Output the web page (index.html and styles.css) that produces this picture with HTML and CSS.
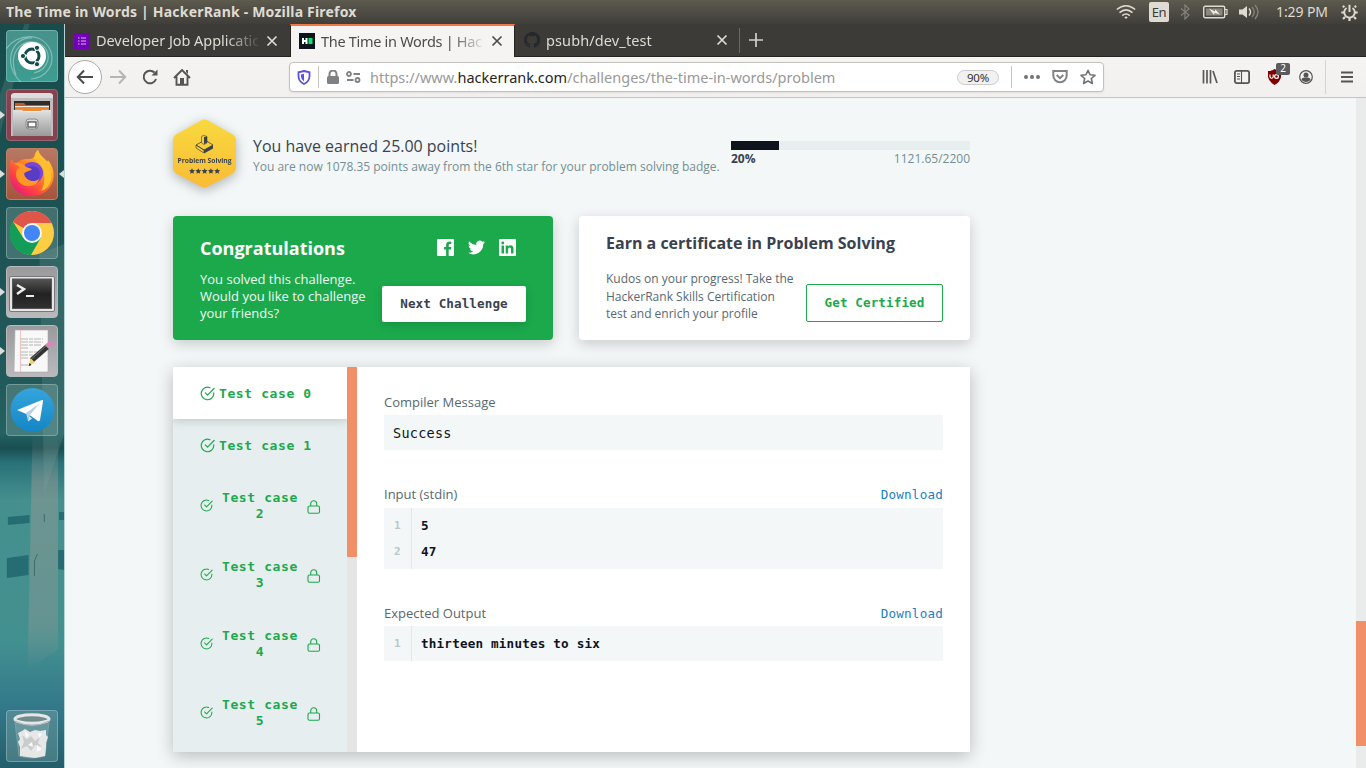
FILE: index.html
```html
<!DOCTYPE html>
<html lang="en">
<head>
<meta charset="utf-8">
<title>The Time in Words | HackerRank</title>
<link rel="stylesheet" href="styles.css">
</head>
<body>
<svg width="0" height="0" class="defs">
  <defs>
    <symbol id="check" viewBox="0 0 24 24"><path d="M22 11v1a10 10 0 1 1-6-9.2M22.500 4 12 14.500l-3.500-3.500" fill="none" stroke="#1ba94c" stroke-width="1.900" stroke-linecap="round" stroke-linejoin="round"/></symbol>
    <symbol id="lock" viewBox="0 0 14 14"><rect x="1" y="6" width="11.500" height="7.300" rx="1.500" fill="none" stroke="#1ba94c" stroke-width="1.100"/><path d="M3.700 6V3.700a3 3 0 0 1 6 0V6" fill="none" stroke="#1ba94c" stroke-width="1.100"/></symbol>
    <symbol id="close" viewBox="0 0 12 12"><path d="M1.500 1.500l9 9m0-9l-9 9" stroke="currentColor" stroke-width="1.700" fill="none"/></symbol>
    <linearGradient id="gold" x1="0" y1="0" x2="0" y2="1"><stop offset="0" stop-color="#f8d93f"/><stop offset="1" stop-color="#fabb35"/></linearGradient>
    <linearGradient id="fox" x1="1" y1="0" x2=".2" y2="1"><stop offset="0" stop-color="#fff34a"/><stop offset=".4" stop-color="#ff9a1f"/><stop offset=".75" stop-color="#ff4340"/><stop offset="1" stop-color="#e61587"/></linearGradient>
    <linearGradient id="steel" x1="0" y1="0" x2="0" y2="1"><stop offset="0" stop-color="#e2e2e2"/><stop offset="1" stop-color="#999"/></linearGradient>
    <linearGradient id="tele" x1="0" y1="0" x2="0" y2="1"><stop offset="0" stop-color="#35a5dc"/><stop offset="1" stop-color="#1486c4"/></linearGradient>
    <linearGradient id="screen" x1="0" y1="0" x2="0" y2="1"><stop offset="0" stop-color="#555"/><stop offset=".5" stop-color="#222"/><stop offset="1" stop-color="#303030"/></linearGradient>
    <linearGradient id="tower" x1="0" y1="0" x2="0" y2="1"><stop offset="0" stop-color="#a09a95" stop-opacity="0"/><stop offset=".2" stop-color="#a09a95" stop-opacity=".45"/><stop offset=".8" stop-color="#a09a95" stop-opacity=".35"/><stop offset="1" stop-color="#a09a95" stop-opacity="0"/></linearGradient>
  </defs>
</svg>
<header class="topbar">
  <span class="window-title">The Time in Words | HackerRank - Mozilla Firefox</span>
  <div class="indicators">
    <svg width="20" height="16" viewBox="0 0 20 16" fill="none" stroke="#dfdbd2" stroke-width="1.500"><path d="M.8 5.500q9.200-7.500 18.400 0M3.500 8.600q6.500-5.500 13 0M6.200 11.600q3.800-3.300 7.600 0"/><path d="M8.300 13.200q1.700-1.500 3.400 0L10 15z" fill="#dfdbd2" stroke="none"/></svg>
    <span class="lang">En</span>
    <svg width="10" height="16" viewBox="0 0 10 16" fill="none" stroke="#85827b" stroke-width="1.200"><path d="M1 4.500l8 6.500-4 4V1l4 4-8 6.500"/></svg>
    <svg width="25" height="14" viewBox="0 0 25 14"><rect x=".7" y="1.200" width="21" height="11.600" rx="1.500" fill="none" stroke="#dfdbd2" stroke-width="1.400"/><path d="M22 4.500h2v5h-2" fill="none" stroke="#dfdbd2" stroke-width="1.200"/><rect x="3" y="3.500" width="16.500" height="7" fill="#8b8880"/><path d="M6 3.600l6 2.900.3-2.200 4.700 5.500-5.500-2.100-.4 2.300z" fill="#f1eee7"/></svg>
    <svg width="20" height="16" viewBox="0 0 20 16" fill="none" stroke-width="1.400"><path d="M0 5.500h3.500L8 2v12l-4.500-3.500H0z" fill="#dfdbd2"/><path d="M10 4.500q3 3.500 0 7" stroke="#dfdbd2"/><path d="M13 3q4.500 5 0 10M16 1q6 7 0 14" stroke="#858179"/></svg>
    <span class="clock">1:29 PM</span>
    <svg width="17" height="17" viewBox="0 0 17 17" fill="none" stroke="#dfdbd2"><path d="M5.500 4A5.300 5.300 0 1 0 11.500 4" stroke-width="1.900"/><path d="M8.500.8V8" stroke-width="2"/><path d="M3.300 3.300L1.900 1.900M13.700 3.300l1.400-1.400M3 8.500H.3M14 8.500h2.700M4 13l-2 2M13 13l2 2M8.500 14v3" stroke-width="2.200"/></svg>
  </div>
</header>
<div class="desktop">
  <nav class="launcher">
    <svg class="wallpaper" viewBox="0 0 65 744" preserveAspectRatio="none">
      <path d="M0 70L25 0h5L0 110zM40 230l25-10v190l-20 60z" fill="#7aa6a0" opacity=".22"/>
      <path d="M33 410h26v215l-31 22z" fill="url(#tower)"/>
      <path d="M8 493l22-2v8l-22 2zM60 488h5v8h-5zM7 534l22-3v20l-22 3zM59 526h6v20l-6-1z" fill="#155b64" opacity=".65"/>
      <path d="M38 530l-3 7v15M45 490v8" stroke="#36635f" fill="none" opacity=".8"/>
    </svg>
    <div class="tile tile-dash"><svg viewBox="0 0 52 52"><path d="M10 45C0 20 20 5 36 15c10 8 8 24-8 28M0 19C10 4 37 0 45 22c4 14-6 26-20 27M15 52C-4 35 5 7 26 8" fill="none" stroke="#b5ded3" stroke-width="1.200" opacity=".55"/><circle cx="26" cy="26" r="14" fill="#fff"/><g transform="translate(-.5 -.5)"><circle cx="26.500" cy="26.500" r="7" fill="none" stroke="#124d4a" stroke-width="3"/><path d="M26 26L17.500 26M27 27l4.500 7.500M27 26l4.500-7.500" stroke="#fff" stroke-width="1.400"/><circle cx="26.500" cy="26.500" r="5" fill="#fff"/><g fill="#124d4a" stroke="#fff"><circle cx="17.500" cy="26.500" r="2.600"/><circle cx="31.500" cy="18.300" r="2.600"/><circle cx="31.500" cy="34.700" r="2.600"/></g></g></svg></div>
    <div class="tile tile-files open"><svg viewBox="0 0 52 52"><path d="M5 6q1-2 3-2h36q2 0 3 2v17H5z" fill="#dcdcdc"/><path d="M5 9h42v38H5z" fill="#bdbdbd"/><path d="M8 12h36v13H8z" fill="#312c28"/><path d="M9 14h9l2 2h23v8H9z" fill="#c25b20"/><path d="M9 17h34v7H9z" fill="#f3eee5"/><path d="M9 18h34v4H9z" fill="#e98b38"/><path d="M7 21l9 0 3 2h14l3-2 9 0v26H7z" fill="url(#steel)"/><rect x="20" y="30" width="12" height="10" rx="3" fill="#ddd" stroke="#888"/><rect x="22" y="33" width="8" height="5" fill="#fff" stroke="#555" stroke-width="1.300"/></svg></div>
    <div class="tile tile-fox open focused"><svg viewBox="0 0 52 52"><path d="M5 11l5 5c3-4 7-5 11-5 3 0 5 0 7-2 1-3 2-6 4-7 1 6 5 7 9 12l1-2c12 15 4 35-15 36C9 49-1 34 5 11z" fill="url(#fox)"/><circle cx="26" cy="25" r="11" fill="#7346df"/><circle cx="26" cy="26" r="8" fill="#593cc5"/><path d="M8 15c6-1 10 0 12 4l6 2c-3 3-7 2-8 5 2 7 10 9 15 5-2 9-17 10-22 0-2-5-1-10 3-12z" fill="#ff9727"/><path d="M28 11c3-5 3-8 4-9 2 7 9 8 11 16 6 14-1 23-8 25 5-8 3-16 3-20-3-7-6-9-10-12z" fill="#ffbf2c"/></svg></div>
    <div class="tile"><svg viewBox="0 0 52 52"><circle cx="26" cy="26" r="22" fill="#ffcd43"/><path d="M26 26L6.900 15A22 22 0 0 1 45.100 15L46.500 16H26z" fill="#de5549"/><path d="M26 26l8.700 5L25 48A22 22 0 0 1 6.900 14.500L17.300 31z" fill="#129d58"/><circle cx="26" cy="26" r="10" fill="#f7f7f7"/><circle cx="26" cy="26" r="8" fill="#4285f4"/></svg></div>
    <div class="tile tile-grey open"><svg viewBox="0 0 52 52"><rect x="3.500" y="10.500" width="45" height="35" rx="1.500" fill="#e6e6e6" stroke="#777"/><rect x="6.500" y="13" width="39" height="29.500" fill="url(#screen)" stroke="#555"/><path d="M11 19l7 4-7 5" fill="none" stroke="#eee" stroke-width="2.500"/><path d="M20 30h8" stroke="#eee" stroke-width="2"/></svg></div>
    <div class="tile tile-grey open"><svg viewBox="0 0 52 52"><path d="M9 5h33v42H8z" fill="#f8f8f8" stroke="#aaa" stroke-width=".6"/><path d="M14.500 5v42" stroke="#e9aaa9" stroke-width=".7"/><path d="M15 14h22M15 17h22M15 20h20M15 23h8M15 27h20M15 30h15M15 33h8M15 40h10" stroke="#a5a5a5" stroke-width=".8" stroke-dasharray="7 1 4 1"/><path d="M25.500 35.500L41.500 21.500" stroke="#333" stroke-width="5.500"/><path d="M25.500 34L40.500 20.500" stroke="#777"/><path d="M24.500 33l4.500 4.500-6 3z" fill="#ecd36f"/><path d="M23.500 38l-1 3 3-1z" fill="#222"/><path d="M41 22l2-2" stroke="#bbb" stroke-width="5.500"/><path d="M43 20l2.500-1.500" stroke="#d688ba" stroke-width="5.500" stroke-linecap="round"/></svg></div>
    <div class="tile"><svg viewBox="0 0 52 52"><circle cx="26.500" cy="26" r="22" fill="url(#tele)"/><path d="M11 26l25-10q1.500-.5 1 1.500L34 36q-.7 2-2.500.8L25 32z" fill="#fff"/><path d="M20 29L34 19 23 32l-1 5z" fill="#b6d3e5"/><path d="M23 32l3 2.500-4 3z" fill="#dcebf4"/></svg></div>
    <div class="tile tile-trash"><svg viewBox="0 0 52 52"><path d="M9 12l4 34q13 4 26 0l4-34z" fill="#a9c5c7" opacity=".3" stroke="#ddd"/><path d="M12 23l4-2 3-2 5 3 5-2 5 1 6-1v5l2 2-2 6v5l-1 8-10 2-8-1-7-1v-9l-2-5 2-3z" fill="#e6e7e7"/><path d="M16 25l5 4 4-3 4 5 5-4-2 6 4 4-7-2-4 6-4-5-6 3 3-7z" fill="#c9cccc"/><path d="M19 21l4 4-3 3zM32 23l4 1-3 4zM22 35l4-3 1 5zM31 35l5 4-5 3z" fill="#fafafa"/><ellipse cx="26" cy="9" rx="17" ry="4.300" fill="#718c8d" stroke="#e6e6e6" stroke-width="3"/><path d="M9 11q17 9 34 0" stroke="#b3b3b3" fill="none"/></svg></div>
  </nav>
  <section class="browser">
    <div class="tabs">
      <div class="tab"><svg class="favicon" viewBox="0 0 16 16"><path d="M0 0h16v16H0z" fill="#7200b5"/><path d="M4 5h1.500M7 5h5M4 8h1.500M7 8h5M4 11h1.500M7 11h5" stroke="#d9b7ec" stroke-width="1.200"/></svg><span class="tab-title">Developer Job Applicatio</span><svg class="tab-close"><use href="#close"/></svg></div>
      <div class="tab active"><svg class="favicon" viewBox="0 0 16 16"><path d="M0 0h16v16H0z" fill="#0e141e"/><path d="M3 5h2v2h1.500V5h2v6h-2V9H5v2H3z" fill="#fff"/><path d="M9.500 5h4v6h-4z" fill="#05e76d"/></svg><span class="tab-title second">The Time in Words | Hack</span><svg class="tab-close"><use href="#close"/></svg></div>
      <div class="tab last"><svg class="favicon" viewBox="0 0 16 16"><path fill="#24292e" d="M8 0a8 8 0 0 0-2.530 15.590c.4.070.55-.17.550-.38v-1.490C3.780 14.200 3.310 12.900 3.310 12.900c-.36-.92-.89-1.170-.89-1.170-.73-.5.050-.49.050-.49.800.06 1.230.83 1.230.83.710 1.220 1.870.87 2.330.66.070-.52.280-.87.500-1.070-1.780-.2-3.640-.89-3.640-3.950 0-.87.310-1.590.82-2.150-.08-.2-.36-1.020.080-2.120 0 0 .67-.21 2.200.82a7.700 7.700 0 0 1 4 0c1.530-1.040 2.200-.82 2.200-.82.440 1.100.160 1.920.080 2.120.510.560.820 1.270.820 2.150 0 3.070-1.870 3.750-3.650 3.950.290.250.540.730.540 1.480v2.190c0 .21.150.460.550.380A8 8 0 0 0 8 0z"/></svg><span class="tab-title third">psubh/dev_test</span><svg class="tab-close"><use href="#close"/></svg></div>
      <svg class="new-tab" width="14" height="14" viewBox="0 0 14 14"><path d="M7 0v14M0 7h14" stroke="#d3cfc9" stroke-width="1.700"/></svg>
    </div>
    <div class="toolbar">
      <span class="back"><svg width="18" height="16" viewBox="0 0 18 16"><path d="M8 1.500L1.800 8 8 14.500M2 8h15" fill="none" stroke="#4b4b4b" stroke-width="2"/></svg></span>
      <svg class="forward" width="17" height="16" viewBox="0 0 17 16"><path d="M9 1.500L15.200 8 9 14.500M0 8h15" fill="none" stroke="#b6b5b3" stroke-width="2"/></svg>
      <svg class="reload" width="16" height="16" viewBox="0 0 16 16"><path d="M14 10A6.300 6.300 0 1 1 12.500 3.500" fill="none" stroke="#555" stroke-width="2"/><path d="M9.500 6.500H15.500V.5z" fill="#555"/></svg>
      <svg class="home" width="18" height="17" viewBox="0 0 18 17"><path d="M1 9l8-8 8 8M3.500 7.500v8.300h11V7.500" fill="none" stroke="#555" stroke-width="1.900"/><path d="M13 1h2v4l-2-2zM7 9h4v7H7z" fill="#555"/></svg>
      <div class="address">
        <svg class="shield" width="14" height="15" viewBox="0 0 14 15"><path d="M7 1l5.500 1.300v4.200Q12.200 11.500 7 14 1.800 11.500 1.500 6.500V2.300z" fill="none" stroke="#5b50e0" stroke-width="1.800"/><path d="M7 3.700v7.700q-3-2-3-5V4.400z" fill="#5b50e0"/></svg>
        <i class="rule"></i>
        <svg class="padlock" width="12" height="14" viewBox="0 0 12 14"><rect y="6" width="12" height="8" rx="1.500" fill="#818181"/><path d="M2.500 7V4a3.500 3.500 0 0 1 7 0v3" fill="none" stroke="#818181" stroke-width="2"/></svg>
        <svg class="perm" width="15" height="12" viewBox="0 0 15 12" fill="none" stroke="#818181" stroke-width="1.800"><circle cx="3" cy="3" r="2"/><path d="M7.500 3H14M1 9h6.500"/><circle cx="11.500" cy="9" r="2"/></svg>
        <span class="url">https://www.<b>hackerrank.com</b>/challenges/the-time-in-words/problem</span>
        <span class="zoom">90%</span>
        <i class="rule tall"></i>
        <svg class="dots" width="16" height="4" viewBox="0 0 16 4" fill="#737373"><circle cx="2" cy="2" r="2"/><circle cx="8" cy="2" r="2"/><circle cx="14" cy="2" r="2"/></svg>
        <svg class="pocket" width="16" height="14" viewBox="0 0 16 14" fill="none" stroke="#818181" stroke-width="2"><path d="M1.300 1h13.400v4.500a6.700 6.700 0 0 1-13.400 0z"/><path d="M4.700 5L8 8.200 11.300 5"/></svg>
        <svg class="star" width="16" height="16" viewBox="0 0 16 16"><path d="M8 1.300l2 4.500 5 .5-3.700 3.200 1.100 5L8 12l-4.400 2.500 1.100-5L1 6.300l5-.5z" fill="none" stroke="#737373" stroke-width="1.600" stroke-linejoin="round"/></svg>
      </div>
      <svg class="library" width="16" height="16" viewBox="0 0 16 16" stroke="#5a5a5a" stroke-width="1.700"><path d="M1.500 1v13.500M5 1v13.500M8.500 1v13.500M11 2l4 12"/></svg>
      <svg class="sidebar-icon" width="16" height="14" viewBox="0 0 16 14"><rect x=".9" y=".9" width="14.200" height="12.200" rx="1.800" fill="none" stroke="#555" stroke-width="1.800"/><path d="M7.500 1v12M3 4h3M3 6.500h3M3 9h3" stroke="#555" stroke-width="1.100"/></svg>
      <div class="ublock"><svg width="15" height="16" viewBox="0 0 15 16"><path d="M7.500 0Q10 2 14 2v6q-1 5-6.500 8Q2 13 1 8V2q4 0 6.500-2z" fill="#800000"/><path d="M3 5.500V8q1.600 2.500 3.200 0V5.500" stroke="#fff" fill="none" stroke-width="1.200"/><circle cx="9.500" cy="7.500" r="1.900" stroke="#fff" fill="none" stroke-width="1.200"/></svg><span>2</span></div>
      <svg class="account" width="14" height="14" viewBox="0 0 14 14"><circle cx="7" cy="7" r="6.300" fill="none" stroke="#555" stroke-width="1.200"/><circle cx="7" cy="5" r="2.500" fill="#555"/><path d="M2.500 10q0-2.500 3-2.500h3q3 0 3 2.500Q7 14 2.500 10z" fill="#555"/></svg>
      <i class="rule menu-rule"></i>
      <svg class="menu" width="12" height="12" viewBox="0 0 12 12"><path d="M0 1.500h12M0 6h12M0 10.500h12" stroke="#555" stroke-width="1.800"/></svg>
    </div>
    <main class="page">
      <div class="content">
        <section class="score">
          <svg class="badge" width="63" height="70" viewBox="0 0 63 70"><path d="M28 1.500q3.500-2 7 0l24 13.500q4 2.500 4 6v28q0 3.500-4 6L35 67.500q-3.500 2-7 0L4 55q-4-2.500-4-6V21q0-3.500 4-6z" fill="url(#gold)"/><path d="M23 26l9-5 8 5-9 5z" fill="none" stroke="#494336" stroke-width=".8"/><path d="M23 26v3l8 5v-3z" fill="none" stroke="#494336" stroke-width=".7"/><path d="M31 31l9-5v3.500L31 34.500z" fill="#39424e"/><path d="M28.500 24v-6q0-1.500 2.500-1.500l3 1v6.500l-3 1.500z" fill="#f6cf3d" stroke="#494336" stroke-width=".6"/><path d="M31 18l3-.5v6l-3 1.700z" fill="#39424e"/><text x="31.500" y="44.300" textLength="54" lengthAdjust="spacingAndGlyphs">Problem Solving</text><g fill="#39424e"><path id="s" d="M19 49.200l.9 1.900 2.100.2-1.600 1.400.5 2.100-1.900-1.100-1.900 1.100.5-2.100-1.600-1.400 2.100-.2z"/><use href="#s" x="6.300"/><use href="#s" x="12.600"/><use href="#s" x="18.900"/><use href="#s" x="25.200"/></g></svg>
          <div class="score-text"><h2>You have earned 25.00 points!</h2><p>You are now 1078.35 points away from the 6th star for your problem solving badge.</p></div>
          <div class="progress"><div class="bar"><div style="width:20%"></div></div><div class="bar-labels"><b>20%</b><span>1121.65/2200</span></div></div>
        </section>
        <section class="cards">
          <article class="card congrats">
            <div class="card-copy"><h3>Congratulations</h3><p>You solved this challenge.<br>Would you like to challenge<br>your friends?</p></div>
            <div class="card-actions">
              <div class="social">
                <svg width="17" height="17" viewBox="0 0 17 17"><path fill="#fff" d="M1 0h15q1 0 1 1v15q0 1-1 1h-4.300v-6.500h2.200l.3-2.600h-2.500V6.300q0-1.200 1.300-1.200h1.300V2.700q-4.900-.6-5.200 3.200v2H7v2.600h2.100V17H1q-1 0-1-1V1q0-1 1-1z"/></svg>
                <svg width="17" height="17" viewBox="0 0 24 24"><path fill="#fff" d="M24 4.600a10 10 0 0 1-2.800.8 5 5 0 0 0 2.100-2.700 10 10 0 0 1-3.100 1.200 4.900 4.900 0 0 0-8.400 4.500A14 14 0 0 1 1.700 3.200a4.900 4.900 0 0 0 1.500 6.500 5 5 0 0 1-2.200-.6 4.900 4.900 0 0 0 3.900 4.900 5 5 0 0 1-2.200.1 4.900 4.900 0 0 0 4.600 3.400A10 10 0 0 1 0 19.500a14 14 0 0 0 21.500-12.400A10 10 0 0 0 24 4.600z"/></svg>
                <svg width="17" height="17" viewBox="0 0 17 17"><path fill="#fff" fill-rule="evenodd" d="M1 0h15q1 0 1 1v15q0 1-1 1H1q-1 0-1-1V1q0-1 1-1zM2.500 6.500v8H5v-8zM3.700 2.500a1.400 1.400 0 1 0 .1 2.900 1.400 1.400 0 0 0-.1-2.900zM6.700 6.500v8h2.400v-4q0-2 1.500-2t1.400 2v4h2.500v-4.700q0-3.500-2.900-3.500-1.800 0-2.500 1.300V6.500z"/></svg>
              </div>
              <button class="btn next">Next Challenge</button>
            </div>
          </article>
          <article class="card certify">
            <h3>Earn a certificate in Problem Solving</h3>
            <div class="certify-row"><p>Kudos on your progress! Take the<br>HackerRank Skills Certification<br>test and enrich your profile</p><button class="btn get">Get Certified</button></div>
          </article>
        </section>
        <section class="results">
          <div class="cases">
            <div class="case selected"><svg width="15" height="15"><use href="#check"/></svg><span>Test case 0</span></div>
            <div class="case"><svg width="15" height="15"><use href="#check"/></svg><span>Test case 1</span></div>
            <div class="case locked"><svg width="13" height="13"><use href="#check"/></svg><span>Test case<br>2</span><svg class="lock" width="14" height="14"><use href="#lock"/></svg></div>
            <div class="case locked"><svg width="13" height="13"><use href="#check"/></svg><span>Test case<br>3</span><svg class="lock" width="14" height="14"><use href="#lock"/></svg></div>
            <div class="case locked"><svg width="13" height="13"><use href="#check"/></svg><span>Test case<br>4</span><svg class="lock" width="14" height="14"><use href="#lock"/></svg></div>
            <div class="case locked"><svg width="13" height="13"><use href="#check"/></svg><span>Test case<br>5</span><svg class="lock" width="14" height="14"><use href="#lock"/></svg></div>
          </div>
          <div class="case-scroll"><div></div></div>
          <div class="output">
            <div class="label"><span>Compiler Message</span></div>
            <pre class="message">Success</pre>
            <div class="label"><span>Input (stdin)</span><a>Download</a></div>
            <div class="code"><div class="nums">1<br>2</div><pre>5
47</pre></div>
            <div class="label"><span>Expected Output</span><a>Download</a></div>
            <div class="code single"><div class="nums">1</div><pre>thirteen minutes to six</pre></div>
          </div>
        </section>
      </div>
      <div class="page-scroll"><div></div></div>
    </main>
  </section>
</div>
</body>
</html>
```
FILE: styles.css
```css
* { box-sizing: border-box; }
body { margin: 0; width: 1366px; height: 768px; overflow: hidden; font-family: "Open Sans", "Noto Sans", sans-serif; color: #39424e; }
h2, h3, p, pre { margin: 0; }
svg { display: block; flex: none; }
.defs { position: absolute; }
.topbar { height: 24px; display: flex; align-items: center; justify-content: space-between; padding: 0 8px 0 6px; background: linear-gradient(#5d5a4e, #4e4c44 50%, #3f3e39); color: #dfdbd2; }
.window-title { font: bold 14px/24px "Noto Sans", sans-serif; letter-spacing: .2px; white-space: nowrap; }
.indicators { display: flex; align-items: center; font: 14px/24px "Noto Sans", sans-serif; }
.lang { width: 20px; height: 20px; margin: 0 11px 0 13px; border-radius: 2px; background: #dfdbd2; color: #3c3b37; font-size: 13px; line-height: 20px; text-align: center; letter-spacing: -.4px; }
.indicators svg:nth-child(4) { margin: 0 11px 0 13px; }
.clock { width: 53px; margin: 0 12px 0 17px; white-space: nowrap; letter-spacing: -.1px; }
.desktop { display: flex; height: 744px; }
.launcher { position: relative; width: 65px; padding: 6px 0 6px 6px; display: flex; flex-direction: column; gap: 7px; background: linear-gradient(#174b4c, #22595a 48%, #246263 55%, #194e51 57%, #287278 59%, #45908e 64%, #439090 83%, #32788a 92%, #235e6a); border-right: 1px solid #b6d3d6; }
.wallpaper { position: absolute; left: 0; top: 0; width: 100%; height: 100%; }
.tile { position: relative; width: 52px; height: 52px; border-radius: 4px; background: rgba(160,190,185,.28); border: 1px solid rgba(220,235,235,.3); }
.tile > svg { width: 52px; height: 52px; margin: -1px; }
.tile-dash { background: linear-gradient(#47928b, #3d9c91); }
.tile-files { background: #88424f; border-color: #9b6570; }
.tile-fox { background: linear-gradient(#b77963, #a5553d); border-color: #bd8068; }
.tile-grey { background: linear-gradient(#9a9a9d, #bababc); border-color: #b9b9bb; }
.tile-trash { margin-top: auto; }
.open::before { content: ""; position: absolute; left: -7px; top: 21px; border: 4px solid transparent; border-left: 5px solid #ddd; border-right: 0; }
.focused::after { content: ""; position: absolute; right: -7px; top: 21px; border: 4px solid transparent; border-right: 5px solid #ddd; border-left: 0; }
.browser { width: 1301px; display: flex; flex-direction: column; }
.tabs { height: 33px; display: flex; align-items: center; background: #3c3b37; border-bottom: 1px solid #252420; }
.tab { width: 225px; height: 33px; display: flex; align-items: center; padding: 1px 12px 0 9px; color: #dfdbd2; font: 14.500px/20px "Noto Sans", sans-serif; }
.tab.active { background: #f5f4f2; color: #4c4c4c; border-top: 2px solid #f07746; border-left: 1px solid #252420; border-right: 1px solid #252420; padding: 0 11px 0 8px; }
.tab.last { width: 225px; height: 25px; border-right: 1px solid #696864; padding: 0 11px 0 9px; }
.favicon { width: 16px; height: 16px; margin-right: 6px; }
.tab-title { flex: 1; min-width: 0; overflow: hidden; white-space: nowrap; padding-bottom: 1px; letter-spacing: -.05px; -webkit-mask-image: linear-gradient(90deg, #000 130px, transparent 166px); mask-image: linear-gradient(90deg, #000 130px, transparent 166px); }
.tab-title.second { letter-spacing: -.3px; }
.tab-title.third { letter-spacing: .12px; }
.tab-close { width: 12px; height: 12px; margin-left: 8px; }
.new-tab { margin-left: 9px; }
.toolbar { height: 41px; flex: none; display: flex; align-items: center; background: linear-gradient(#f5f4f2, #f1f0ee); border-bottom: 1px solid #c5c4c1; padding-left: 3px; }
.back { width: 34px; height: 34px; display: grid; place-items: center; border: 1px solid #aaa; border-radius: 50%; background: #fff; }
.forward { margin-left: 8px; }
.reload { margin-left: 15px; }
.home { margin-left: 15px; }
.address { width: 815px; height: 30px; margin-left: 98px; display: flex; align-items: center; border: 1px solid #c3c1be; border-radius: 4px; background: #fff; padding-left: 7px; box-shadow: 0 1px 2px rgba(0,0,0,.08); }
.rule { width: 1px; height: 22px; background: #c5c4c1; margin-left: 7px; }
.padlock { margin-left: 8px; }
.perm { margin-left: 7px; }
.url { width: 466px; margin-left: 9px; white-space: nowrap; color: #999; font: 14.500px/24px "Noto Sans", sans-serif; }
.url b { font-weight: normal; color: #252525; }
.zoom { width: 42px; height: 15px; margin-left: 121px; border: 1px solid #ccc; border-radius: 8px; background: #f1f1f1; color: #333; font: 11.500px/13px "Noto Sans", sans-serif; text-align: center; letter-spacing: -.3px; }
.rule.tall { margin-left: 12px; }
.dots { margin-left: 12px; }
.pocket { margin-left: 12px; }
.star { margin-left: 12px; }
.library { margin-left: 98px; }
.sidebar-icon { margin-left: 16px; }
.ublock { position: relative; margin-left: 17px; }
.ublock span { position: absolute; left: 9px; top: -6px; width: 14px; height: 12px; background: #5c5c5e; border-radius: 2px; color: #fff; font: 10px/11px "Noto Sans", sans-serif; text-align: center; }
.account { margin-left: 17px; }
.menu-rule { height: 34px; margin-left: 12px; background: #d5d4d1; }
.menu { margin-left: 15px; }
.page { height: 670px; display: flex; justify-content: space-between; background: #f3f7f7; }
.content { width: 905px; padding: 21px 0 0 108px; }
.score { display: flex; height: 97px; }
.badge { overflow: visible; filter: drop-shadow(0 3px 6px rgba(0,0,0,.28)); }
.badge text { font: bold 6.500px "Open Sans", sans-serif; text-anchor: middle; fill: #39424e; }
.score-text { flex: none; width: 495px; padding: 16px 0 0 17px; white-space: nowrap; }
.score-text h2 { font-size: 15.950px; font-weight: 400; line-height: 22px; }
.score-text p { font-size: 12px; line-height: 19px; color: #738f93; }
.progress { width: 239px; padding-top: 22px; }
.bar { height: 9px; background: #e7eeef; }
.bar div { height: 9px; background: #0e141e; }
.bar-labels { display: flex; justify-content: space-between; font-size: 12px; line-height: 17px; color: #738f93; }
.bar-labels b { color: #39424e; }
.cards { display: flex; gap: 26px; height: 124px; margin-bottom: 27px; }
.card { height: 124px; border-radius: 4px; box-shadow: 0 4px 14px rgba(0,0,0,.18); }
.congrats { width: 380px; background: #1ba94c; color: #fff; display: flex; justify-content: space-between; padding: 20px 27px 18px; }
.congrats h3 { font-size: 18px; line-height: 24px; margin-bottom: 11px; }
.congrats p { font-size: 13px; line-height: 17px; white-space: nowrap; color: #f0faf3; }
.card-actions { display: flex; flex-direction: column; justify-content: space-between; width: 144px; }
.social { display: flex; gap: 14px; padding: 3px 10px 0 55px; }
.btn { font: bold 12.600px/18px "DejaVu Sans Mono", monospace; letter-spacing: .1px; padding: 0; border-radius: 2px; white-space: nowrap; }
.next { width: 144px; height: 36px; background: #fff; color: #39424e; border: 0; box-shadow: 0 3px 9px rgba(0,0,0,.14); }
.certify { width: 391px; background: #fff; padding: 16px 27px 18px; }
.certify h3 { font-size: 16px; line-height: 22px; white-space: nowrap; }
.certify-row { display: flex; justify-content: space-between; padding-top: 16px; }
.certify p { font-size: 12px; line-height: 17.500px; color: #576871; white-space: nowrap; }
.get { width: 137px; height: 38px; margin-top: 14px; background: #fff; border: 1px solid #1ba94c; color: #1ba94c; }
.results { display: flex; height: 385px; background: #fff; box-shadow: 0 4px 16px rgba(0,0,0,.24); }
.cases { width: 174px; background: #e7eeef; color: #1ba94c; font: bold 13px/16px "DejaVu Sans Mono", monospace; letter-spacing: .6px; }
.case { height: 52px; display: flex; align-items: center; gap: 4px; padding-left: 27px; white-space: nowrap; }
.case span { padding-top: 1px; }
.case.selected { background: #fff; box-shadow: 0 2px 9px rgba(0,0,0,.16); position: relative; clip-path: inset(0 0 -12px 0); }
.case.locked { height: 69px; gap: 9px; text-align: center; }
.case.locked span { padding-top: 0; }
.lock { margin-top: 3px; }
.case-scroll { width: 10px; background: #e5e5e5; }
.case-scroll div { height: 190px; background: #f08f68; border-radius: 1px; }
.output { width: 613px; padding: 26px 27px 0; }
.label { height: 18px; display: flex; justify-content: space-between; align-items: center; font-size: 13px; line-height: 18px; color: #576871; margin-bottom: 4px; }
.label a { color: #1b80c4; font: 12.600px/18px "DejaVu Sans Mono", monospace; letter-spacing: .2px; padding-top: 1px; }
.message { height: 35px; background: #f3f7f7; color: #0e141e; font: 13.500px/36px "DejaVu Sans Mono", monospace; letter-spacing: .25px; padding-left: 9px; margin-bottom: 35px; }
.code { height: 61px; display: flex; background: #f3f7f7; margin: 5px 0 35px; }
.code.single { height: 35px; margin: 4px 0 0; }
.nums { width: 28px; border-right: 1px solid #e0e7e9; color: #b7c9cc; font: bold 11px/26px "DejaVu Sans Mono", monospace; padding: 5px 0 0 10px; }
.code pre { padding: 5px 0 0 9px; color: #0e141e; font: bold 12.600px/26px "DejaVu Sans Mono", monospace; letter-spacing: .2px; }
.page-scroll { width: 10px; padding-top: 523px; background: #e9eceb; }
.page-scroll div { height: 125px; background: #f08f68; }
```
